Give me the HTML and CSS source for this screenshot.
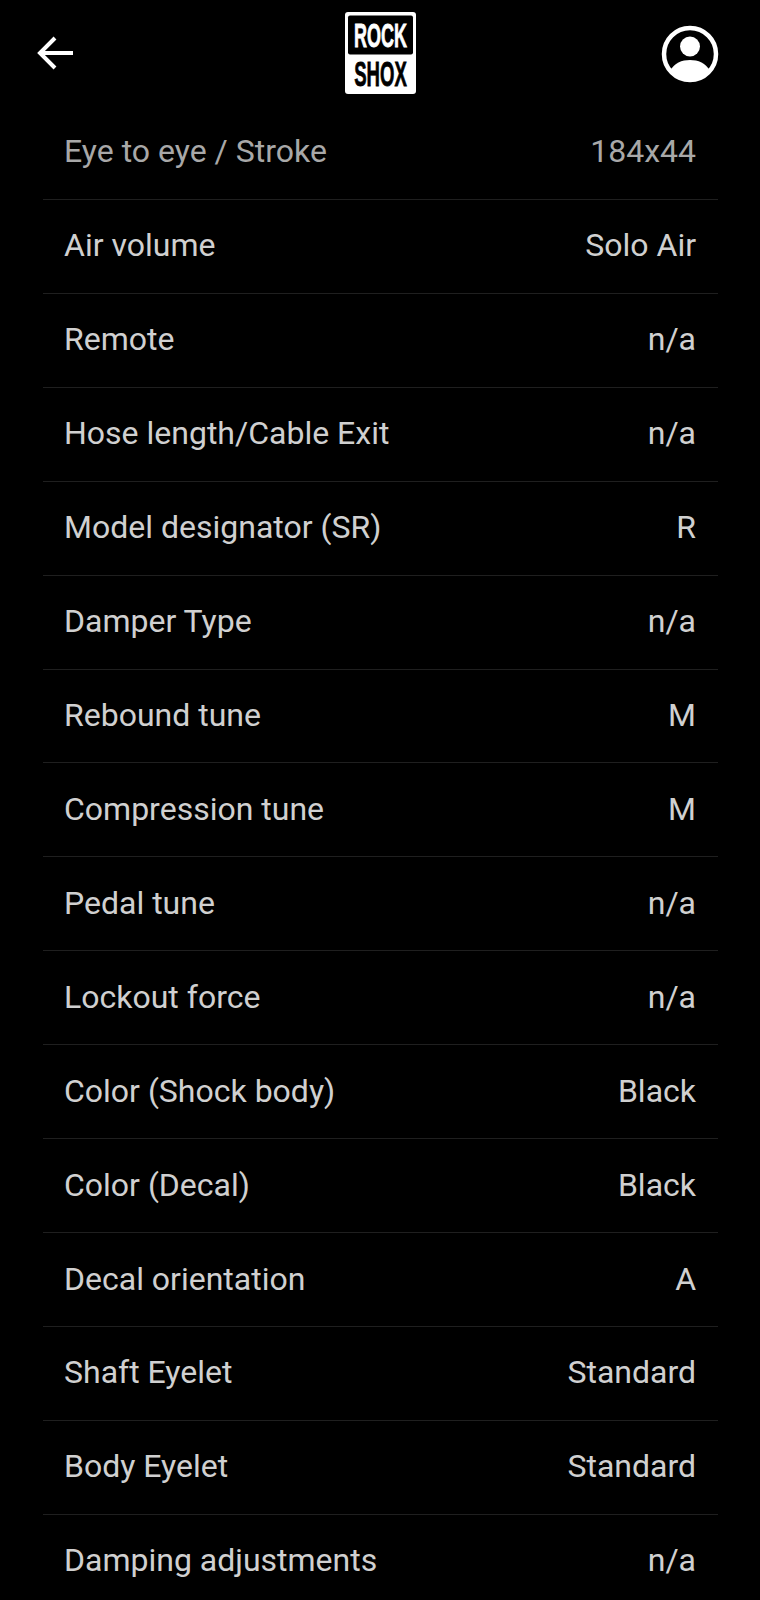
FILE: index.html
```html
<!DOCTYPE html>
<html>
<head>
    <title>Shock details</title>
    <meta name="viewport" content="width=device-width, initial-scale=1.0">
    <link rel="stylesheet" href="styles.css">
</head>
<body>
    <header class="topbar">
        <button class="icon-btn back-btn" aria-label="Back">
            <svg width="40" height="36" viewBox="0 0 40 36">
                <path d="M38 18H5M20 3 5 18l15 15" fill="none" stroke="#fff" stroke-width="4"/>
            </svg>
        </button>
        <svg class="logo" width="71" height="82" viewBox="0 0 71 82">
            <rect width="71" height="82" rx="3" fill="#fff"/>
            <rect x="3" y="3.5" width="65" height="39" rx="2" fill="#000"/>
            <text class="logo-text" transform="translate(35.5 0) scale(0.53 1)" text-anchor="middle"><tspan class="logo-rock" x="0" y="35">ROCK</tspan><tspan class="logo-shox" x="0" y="74">SHOX</tspan></text>
        </svg>
        <button class="icon-btn user-btn" aria-label="Profile">
            <svg width="58" height="58" viewBox="0 0 58 58">
                <circle cx="29" cy="29" r="26" fill="none" stroke="#fff" stroke-width="4.5"/>
                <circle cx="29" cy="21.5" r="10" fill="#fff"/>
                <path d="M9 46c4-8 12-11 20-11s16 3 20 11c-5 6-12 9-20 9s-15-3-20-9z" fill="#fff"/>
            </svg>
        </button>
    </header>

    <!-- spec list -->
    <ul class="spec-list">
        <li class="spec-row first"><span>Eye to eye / Stroke</span><span>184x44</span></li>
        <li class="spec-row"><span>Air volume</span><span>Solo Air</span></li>
        <li class="spec-row"><span>Remote</span><span>n/a</span></li>
        <li class="spec-row"><span>Hose length/Cable Exit</span><span>n/a</span></li>
        <li class="spec-row"><span>Model designator (SR)</span><span>R</span></li>
        <li class="spec-row"><span>Damper Type</span><span>n/a</span></li>
        <li class="spec-row"><span>Rebound tune</span><span>M</span></li>
        <li class="spec-row"><span>Compression tune</span><span>M</span></li>
        <li class="spec-row"><span>Pedal tune</span><span>n/a</span></li>
        <li class="spec-row"><span>Lockout force</span><span>n/a</span></li>
        <li class="spec-row"><span>Color (Shock body)</span><span>Black</span></li>
        <li class="spec-row"><span>Color (Decal)</span><span>Black</span></li>
        <li class="spec-row"><span>Decal orientation</span><span>A</span></li>
        <li class="spec-row"><span>Shaft Eyelet</span><span>Standard</span></li>
        <li class="spec-row"><span>Body Eyelet</span><span>Standard</span></li>
        <li class="spec-row"><span>Damping adjustments</span><span>n/a</span></li>
    </ul>
</body>
</html>
```

FILE: styles.css
```css
html, body {
    height: 1600px;
    overflow: hidden;
}
body {
    margin: 0;
    padding: 0;
    background-color: #000;
    font-family: Roboto, "Liberation Sans", sans-serif;
    color: #d0d0d0;
}
.topbar {
    height: 106px;
    display: grid;
    grid-template-columns: 1fr auto 1fr;
    align-items: start;
    padding: 0 41px;
}
.icon-btn {
    background: none;
    border: 0;
    padding: 0;
    display: block;
}
.back-btn {
    margin: 35px 0 0 -6px;
    justify-self: start;
}
.user-btn {
    margin-top: 25px;
    justify-self: end;
}
.logo {
    display: block;
    margin-top: 12px;
}
.logo-text {
    font-family: "Liberation Sans", sans-serif;
    font-weight: bold;
    stroke-width: 0.8px;
}
.logo-rock {
    font-size: 34px;
    fill: #fff;
    stroke: #fff;
}
.logo-shox {
    font-size: 35px;
    fill: #000;
    stroke: #000;
}
.spec-list {
    list-style: none;
    margin: 0 42px 0 43px;
    padding: 0;
}
.spec-row {
    height: 93.93px;
    box-sizing: border-box;
    display: flex;
    align-items: center;
    justify-content: space-between;
    padding: 0 22px 2px 21px;
    border-bottom: 1px solid #1f1f1f;
    font-size: 32px;
}
.spec-row.first {
    color: #a8a8a8;
}
```
